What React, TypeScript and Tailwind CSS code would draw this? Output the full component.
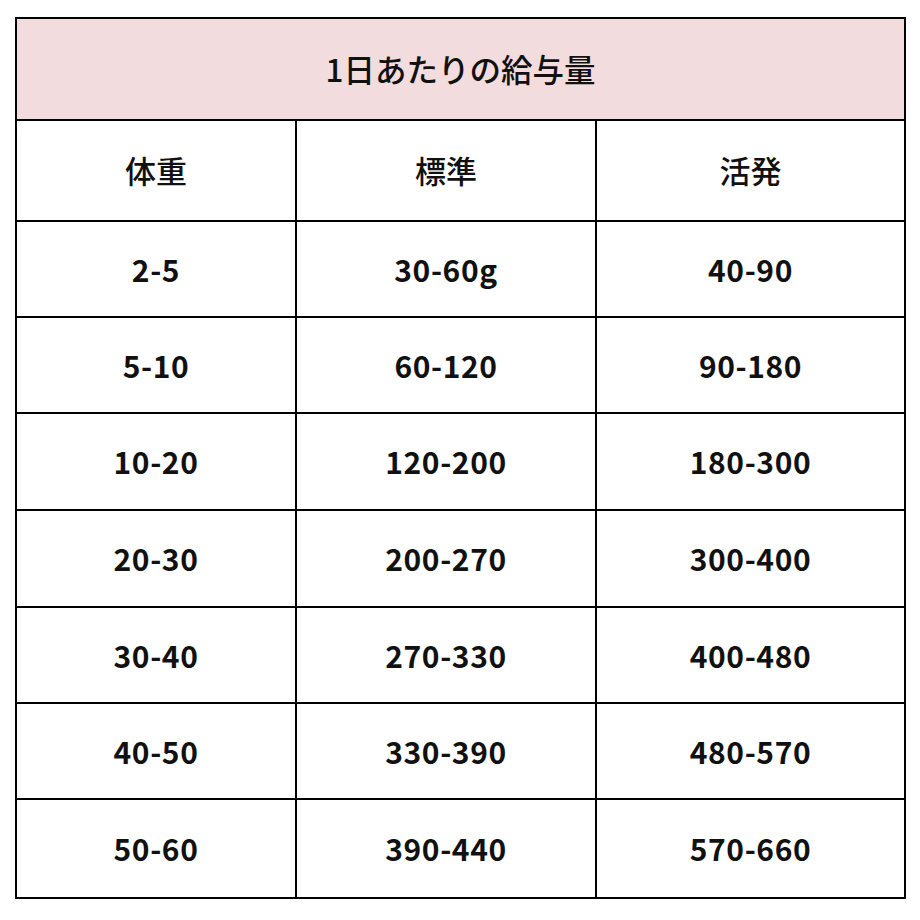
const rows: [string, string, string, string][] = [
  ["2-5", "30-60g", "40-90", "h-[96px]"],
  ["5-10", "60-120", "90-180", "h-[96px]"],
  ["10-20", "120-200", "180-300", "h-[97px]"],
  ["20-30", "200-270", "300-400", "h-[97px]"],
  ["30-40", "270-330", "400-480", "h-[96px]"],
  ["40-50", "330-390", "480-570", "h-[96px]"],
  ["50-60", "390-440", "570-660", "h-[97px]"],
];

const font = { fontFamily: '"Noto Sans CJK JP", "Noto Sans", sans-serif' };

export default function App() {
  return (
    <div className="w-[920px] h-[920px] bg-white pl-[15px] pt-[17px] text-[#111]" style={font}>
      <div className="w-[891px] border-2 border-black">
        <div className="h-[102px] border-b-2 border-black bg-[#f3dcdd] flex items-center justify-center text-[31.5px] font-medium">
          1日あたりの給与量
        </div>
        <div className="h-[101px] border-b-2 border-black flex text-[31px] font-medium">
          <div className="w-[280px] border-r-2 border-black flex items-center justify-center">体重</div>
          <div className="w-[300px] border-r-2 border-black flex items-center justify-center">標準</div>
          <div className="flex-1 flex items-center justify-center">活発</div>
        </div>
        {rows.map(([a, b, c, h], i) => (
          <div
            key={a}
            className={`${h} flex text-[30px] font-bold tracking-[0.6px] ${i < rows.length - 1 ? "border-b-2 border-black" : ""}`}
          >
            <div className="w-[280px] border-r-2 border-black flex items-center justify-center">{a}</div>
            <div className="w-[300px] border-r-2 border-black flex items-center justify-center">{b}</div>
            <div className="flex-1 flex items-center justify-center">{c}</div>
          </div>
        ))}
      </div>
    </div>
  );
}
